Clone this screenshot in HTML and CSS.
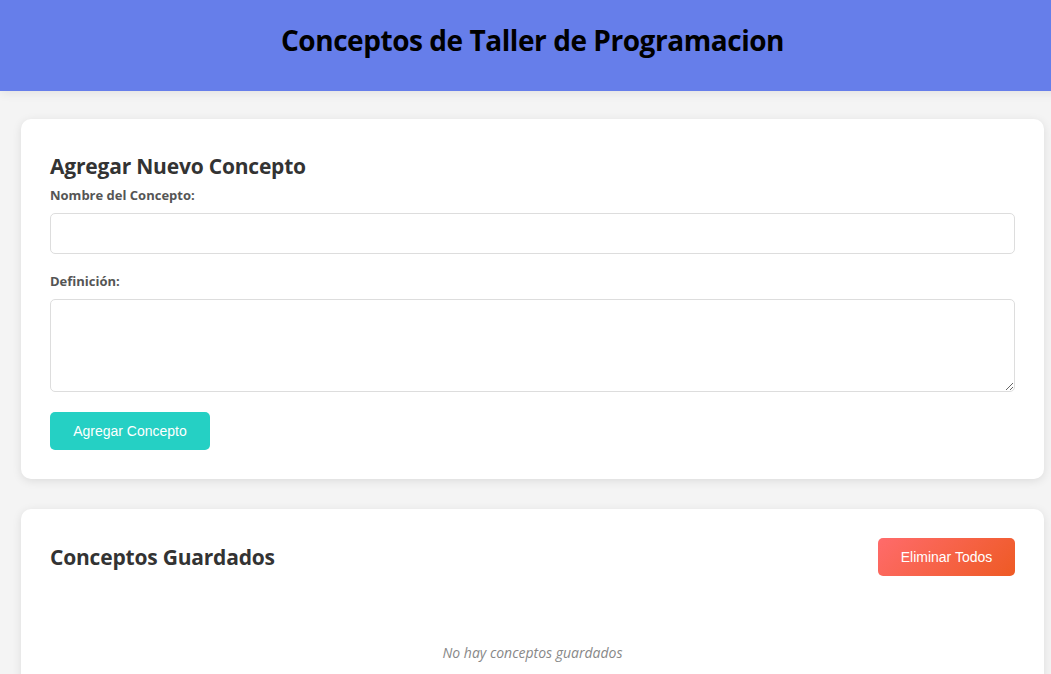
FILE: index.html
```html
<!DOCTYPE html>
<html lang="es">
<head>
<meta charset="utf-8">
<title>Conceptos de Taller de Programacion</title>
<link rel="stylesheet" href="styles.css">
</head>
<body>
<div class="page">
  <header class="site-header">
    <h1 class="site-title">Conceptos de Taller de Programacion</h1>
  </header>
  <main class="container">
    <section class="card card-form">
      <h2 class="card-title">Agregar Nuevo Concepto</h2>
      <form class="concept-form">
        <label class="field-label" for="nombre">Nombre del Concepto:</label>
        <input class="field-input" id="nombre" type="text">
        <label class="field-label field-label-gap" for="definicion">Definición:</label>
        <textarea class="field-textarea" id="definicion"></textarea>
        <button class="btn btn-add" type="button">Agregar Concepto</button>
      </form>
    </section>
    <section class="card card-list">
      <div class="card-head">
        <h2 class="card-title card-title-flat">Conceptos Guardados</h2>
        <button class="btn btn-clear" type="button">Eliminar Todos</button>
      </div>
      <p class="empty-msg">No hay conceptos guardados</p>
    </section>
  </main>
</div>
</body>
</html>
```
FILE: styles.css
```css
* { box-sizing: border-box; }
html, body { margin: 0; padding: 0; }
body {
  font-family: "Open Sans", "Noto Sans", sans-serif;
  background: #f4f4f4;
  color: #333;
  overflow: hidden;
}
.page {
  width: 1065px;
}
.site-header {
  background: #667eea;
  height: 91px;
  display: flex;
  align-items: center;
  justify-content: center;
  box-shadow: 0 2px 10px rgba(0,0,0,0.08);
}
.site-title {
  margin: 0 0 12px;
  font-size: 28px;
  font-weight: 700;
  color: #000;
  letter-spacing: -0.45px;
}
.container {
  margin: 0 21px;
  padding-top: 28px;
  display: flex;
  flex-direction: column;
  gap: 30px;
}
.card {
  background: #fff;
  border-radius: 10px;
  box-shadow: 0 2px 10px rgba(0,0,0,0.1);
  padding: 30px 29px 29px 29px;
}
.card-form { padding-top: 33px; }
.card-list { padding-top: 29px; }
.card-title {
  margin: 0 0 6px;
  font-size: 21px;
  font-weight: 700;
  color: #333;
  letter-spacing: -0.2px;
}
.concept-form { display: flex; flex-direction: column; align-items: flex-start; }
.field-label {
  font-size: 13px;
  font-weight: 700;
  color: #555;
  margin-bottom: 9px;
}
.field-label-gap { margin-top: 18px; }
.field-input, .field-textarea {
  width: 100%;
  border: 1px solid #ddd;
  border-radius: 5px;
  font-family: inherit;
  font-size: 14px;
  background: #fff;
}
.field-input { height: 41px; }
.field-textarea { height: 93px; resize: vertical; }
.btn {
  border: none;
  border-radius: 5px;
  color: #fff;
  font-family: "Liberation Sans", Arial, sans-serif;
  font-size: 14px;
  height: 38px;
  cursor: pointer;
}
.btn-add {
  margin-top: 20px;
  width: 160px;
  background: #25d0c4;
}
.card-head {
  display: flex;
  align-items: center;
  justify-content: space-between;
}
.card-title-flat { margin: 0; }
.btn-clear {
  width: 137px;
  background: linear-gradient(135deg, #ff6b6b, #ee5a24);
}
.empty-msg {
  margin: 67px 0 0;
  text-align: center;
  font-style: italic;
  font-size: 14px;
  color: #888;
}
```
